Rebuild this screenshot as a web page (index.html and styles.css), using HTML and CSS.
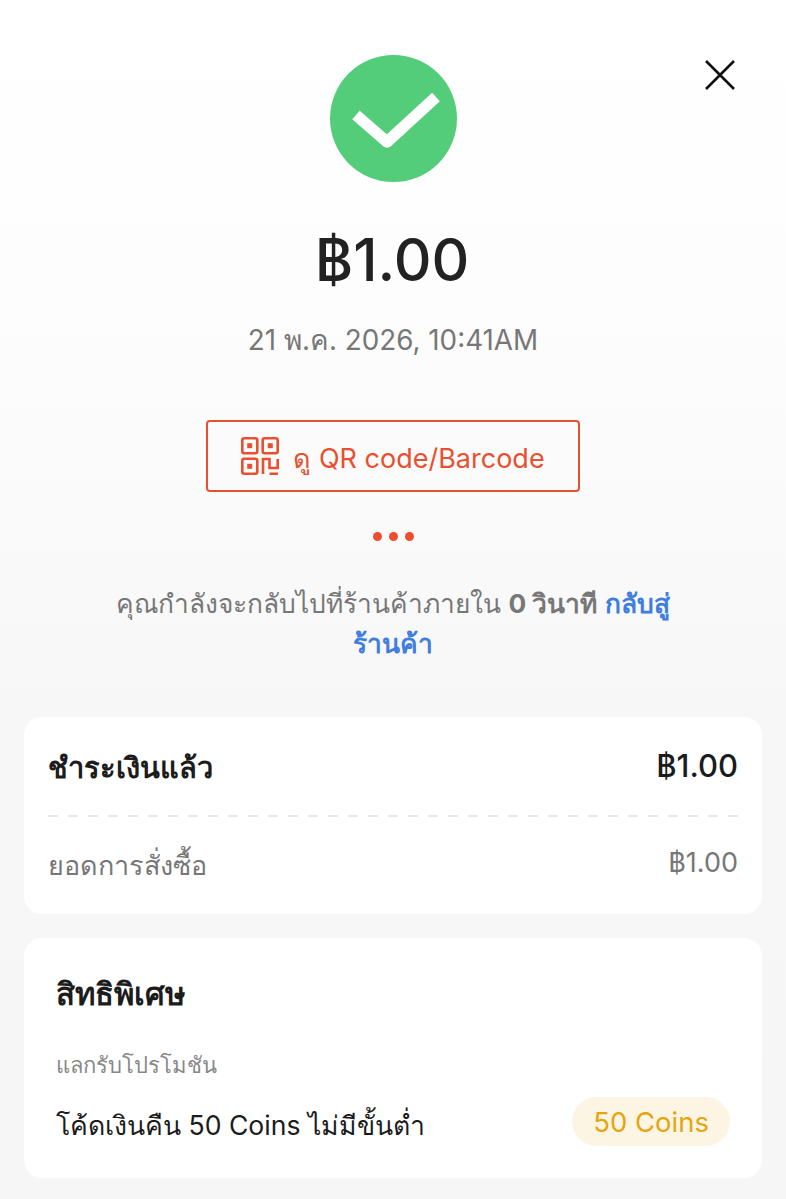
FILE: index.html
```html
<!DOCTYPE html>
<html lang="th">
<head>
  <meta charset="utf-8">
  <title>ชำระเงินแล้ว</title>
  <link rel="stylesheet" href="styles.css">
</head>
<body>
  <div class="page">
    <svg class="close" viewBox="0 0 30 30" width="30" height="30">
      <path d="M1 1 L29 29 M29 1 L1 29" fill="none" stroke="#111" stroke-width="2.6"/>
    </svg>

    <section class="summary">
      <svg class="check" viewBox="0 0 127 127" width="127" height="127">
        <circle cx="63.5" cy="63.5" r="63.5" fill="#53cd7a"/>
        <path d="M26 60 L57 87 L106 42" fill="none" stroke="#fff" stroke-width="11.5" stroke-linejoin="round"/>
      </svg>
      <div class="amount">฿1.00</div>
      <div class="date">21 พ.ค. 2026, 10:41AM</div>
      <a class="qr-btn">
        <svg viewBox="0 0 38 38" width="38" height="38" fill="none" stroke="#e8502f" stroke-width="2.6">
          <rect x="1.3" y="1.3" width="15" height="15" rx="2"/>
          <rect x="21.7" y="1.3" width="15" height="15" rx="2"/>
          <rect x="1.3" y="21.7" width="15" height="15" rx="2"/>
          <rect x="6.2" y="6.2" width="5" height="5" fill="#e8502f" stroke="none"/>
          <rect x="26.8" y="6.2" width="5" height="5" fill="#e8502f" stroke="none"/>
          <rect x="6.2" y="26.8" width="5" height="5" fill="#e8502f" stroke="none"/>
          <path d="M22 37 V22 H28.5 V31 H36.7 V22 M28.5 36.7 H37"/>
        </svg>
        <span>ดู QR code/Barcode</span>
      </a>
      <div class="dots"><i></i><i></i><i></i></div>
      <p class="redirect">คุณกำลังจะกลับไปที่ร้านค้าภายใน <b>0 วินาที</b> <a>กลับสู่<br>ร้านค้า</a></p>
    </section>

    <section class="card paid">
      <div class="row total">
        <span class="label">ชำระเงินแล้ว</span>
        <span class="price">฿1.00</span>
      </div>
      <div class="divider"></div>
      <div class="row sub">
        <span>ยอดการสั่งซื้อ</span>
        <span class="sub-price">฿1.00</span>
      </div>
    </section>

    <section class="card perks">
      <h2>สิทธิพิเศษ</h2>
      <div class="perk-label">แลกรับโปรโมชัน</div>
      <div class="row perk">
        <span class="perk-name">โค้ดเงินคืน 50 Coins ไม่มีขั้นต่ำ</span>
        <span class="coins">50 Coins</span>
      </div>
    </section>
  </div>
</body>
</html>
```

FILE: styles.css
```css
* {
  box-sizing: border-box;
}

html, body {
  margin: 0;
  padding: 0;
}

body {
  font-family: Inter, "Noto Sans", "DejaVu Sans", sans-serif;
  background: linear-gradient(#ffffff 0, #fdfdfd 300px, #fafafa 520px, #f7f7f7 720px, #f6f6f6 100%);
  color: #1c1c1c;
  height: 1199px;
  overflow: hidden;
}

.page {
  position: relative;
  padding: 55px 24px 0;
}

.close {
  position: absolute;
  top: 60px;
  right: 51px;
}

.summary {
  display: flex;
  flex-direction: column;
  align-items: center;
}

.check {
  display: block;
}

.amount {
  font-size: 58.6px;
  font-weight: 500;
  line-height: 70px;
  margin-top: 43px;
  margin-right: 2px;
  color: #222;
}

.date {
  font-size: 27.8px;
  line-height: 34px;
  margin-top: 28px;
  color: #777;
}

.qr-btn {
  display: flex;
  align-items: center;
  justify-content: center;
  gap: 14px;
  width: 374px;
  height: 72px;
  margin-top: 63px;
  border: 2px solid #e8502f;
  border-radius: 4px;
  color: #e8502f;
  font-size: 27px;
}

.qr-btn span {
  margin-top: 4px;
}

.dots {
  display: flex;
  gap: 7px;
  margin-top: 40px;
}

.dots i {
  width: 9px;
  height: 9px;
  border-radius: 50%;
  background: #ee4d2d;
}

.redirect {
  margin: 43px 0 0;
  width: 600px;
  font-size: 26.3px;
  line-height: 40px;
  text-align: center;
  color: #777;
}

.redirect a {
  color: #3f7ee0;
  font-weight: 600;
}

.card {
  background: #fff;
  border-radius: 18px;
}

.row {
  display: flex;
  justify-content: space-between;
  align-items: center;
}

.paid {
  height: 197px;
  margin-top: 53px;
  padding: 0 24px;
}

.total {
  height: 98px;
  font-size: 29px;
  font-weight: 600;
}

.total .label {
  margin-top: 4px;
}

.price {
  font-size: 31px;
  font-weight: 500;
  margin-bottom: 2px;
}

.divider {
  height: 2px;
  background: repeating-linear-gradient(90deg, #e8e8e8 0 10px, transparent 10px 20px);
}

.sub {
  height: 97px;
  font-size: 27px;
  color: #777;
}

.sub-price {
  margin-bottom: 6px;
}

.perks {
  height: 240px;
  margin-top: 24px;
  padding: 32px 32px 0;
}

.perks h2 {
  margin: 0;
  font-size: 31px;
  line-height: 48px;
  font-weight: 600;
}

.perk-label {
  margin-top: 30px;
  font-size: 22px;
  line-height: 34px;
  color: #888;
}

.perk {
  margin-top: 14px;
  font-size: 26.6px;
}

.perk-name {
  margin-top: 8px;
}

.coins {
  display: flex;
  align-items: center;
  height: 49px;
  padding: 0 21px;
  border-radius: 25px;
  background: #fdf5e3;
  color: #e5a50f;
  font-size: 27.5px;
}
```
